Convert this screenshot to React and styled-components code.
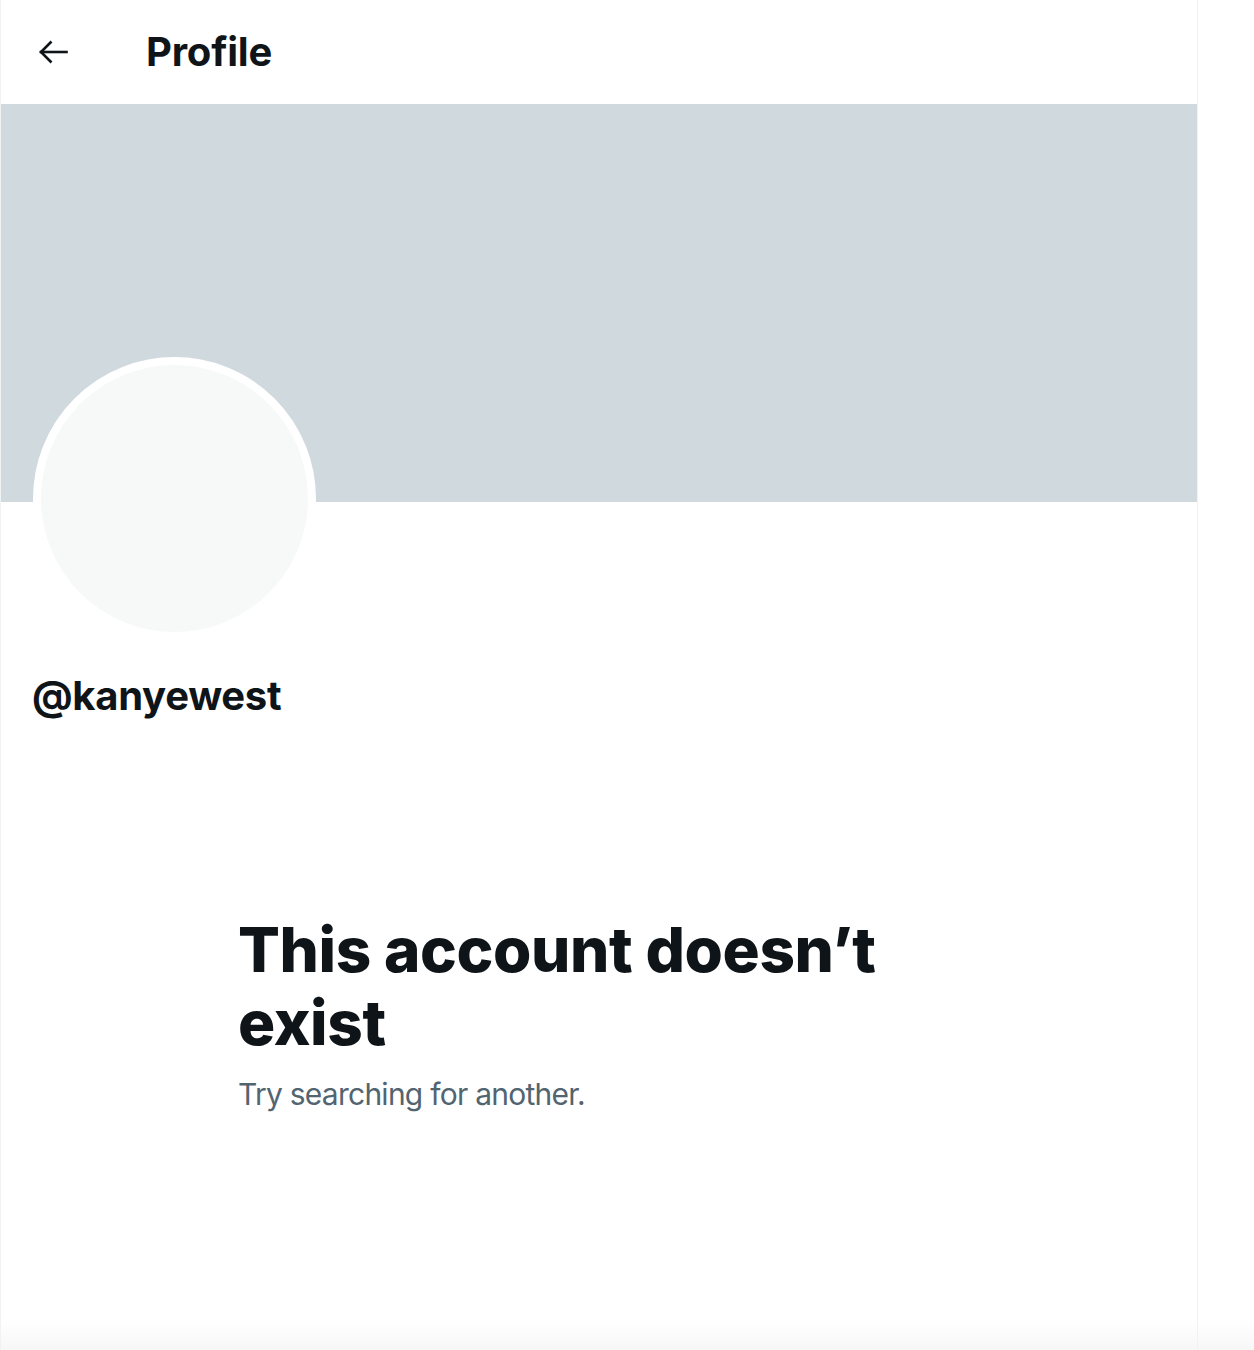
import React from "react"
import styled, { createGlobalStyle } from "styled-components"

const GlobalStyle = createGlobalStyle`
    html, body {
        margin: 0;
        padding: 0;
    }
    body {
        font-family: Inter, "Noto Sans", "Liberation Sans", sans-serif;
        color: #0f1419;
        background: linear-gradient(to bottom, #ffffff 0, #ffffff 1320px, #f7f7f7 1350px);
        min-height: 1350px;
    }
`

function BackArrow() {
    return (
        <svg width="30" height="26" viewBox="0 0 30 26" fill="none" stroke="#0f1419" strokeWidth="2.6" strokeLinecap="square">
            <path d="M28.5 13H3" />
            <path d="M13.5 2.5L3 13l10.5 10.5" strokeLinecap="butt" />
        </svg>
    )
}

function App() {
    return (
        <>
            <GlobalStyle />
            <Page>
                <Column>
                    <Header>
                        <BackButton aria-label="Back">
                            <BackArrow />
                        </BackButton>
                        <HeaderTitle>Profile</HeaderTitle>
                    </Header>

                    <Banner />

                    <ProfileInfo>
                        <Avatar />
                        <Handle>@kanyewest</Handle>
                    </ProfileInfo>

                    <EmptyState>
                        <EmptyTitle>This account doesn’t exist</EmptyTitle>
                        <EmptyText>Try searching for another.</EmptyText>
                    </EmptyState>
                </Column>
            </Page>
        </>
    )
}

const Page = styled.div`
    display: flex;
    min-height: 1350px;
`

const Column = styled.main`
    width: 1196px;
    min-height: 1350px;
    border-left: 1px solid #eff3f4;
    border-right: 1px solid #eff3f4;
    box-sizing: content-box;
`

const Header = styled.header`
    height: 104px;
    display: flex;
    align-items: center;
    padding-left: 37px;
`

const BackButton = styled.div`
    width: 30px;
    height: 26px;
    display: flex;
    align-items: center;
    margin-right: 78px;
`

const HeaderTitle = styled.h2`
    margin: 0;
    font-size: 40px;
    font-weight: 700;
    letter-spacing: -0.2px;
    line-height: 48px;
`

const Banner = styled.div`
    height: 398px;
    background: #cfd9de;
`

const ProfileInfo = styled.section`
    padding-left: 32px;
`

const Avatar = styled.div`
    width: 267px;
    height: 267px;
    margin-top: -145px;
    border: 8px solid #ffffff;
    border-radius: 50%;
    background: #f7f9f9;
`

const Handle = styled.div`
    margin-top: 32px;
    margin-left: -1px;
    font-size: 40px;
    font-weight: 700;
    line-height: 48px;
    letter-spacing: -0.3px;
`

const EmptyState = styled.section`
    padding: 193px 0 0 237px;
    max-width: 670px;
`

const EmptyTitle = styled.h1`
    margin: 0;
    font-size: 62px;
    font-weight: 800;
    line-height: 73px;
    letter-spacing: -0.4px;
`

const EmptyText = styled.p`
    margin: 15px 0 0;
    font-size: 30px;
    font-weight: 400;
    line-height: 40px;
    letter-spacing: -0.75px;
    color: #536471;
`

export default App
